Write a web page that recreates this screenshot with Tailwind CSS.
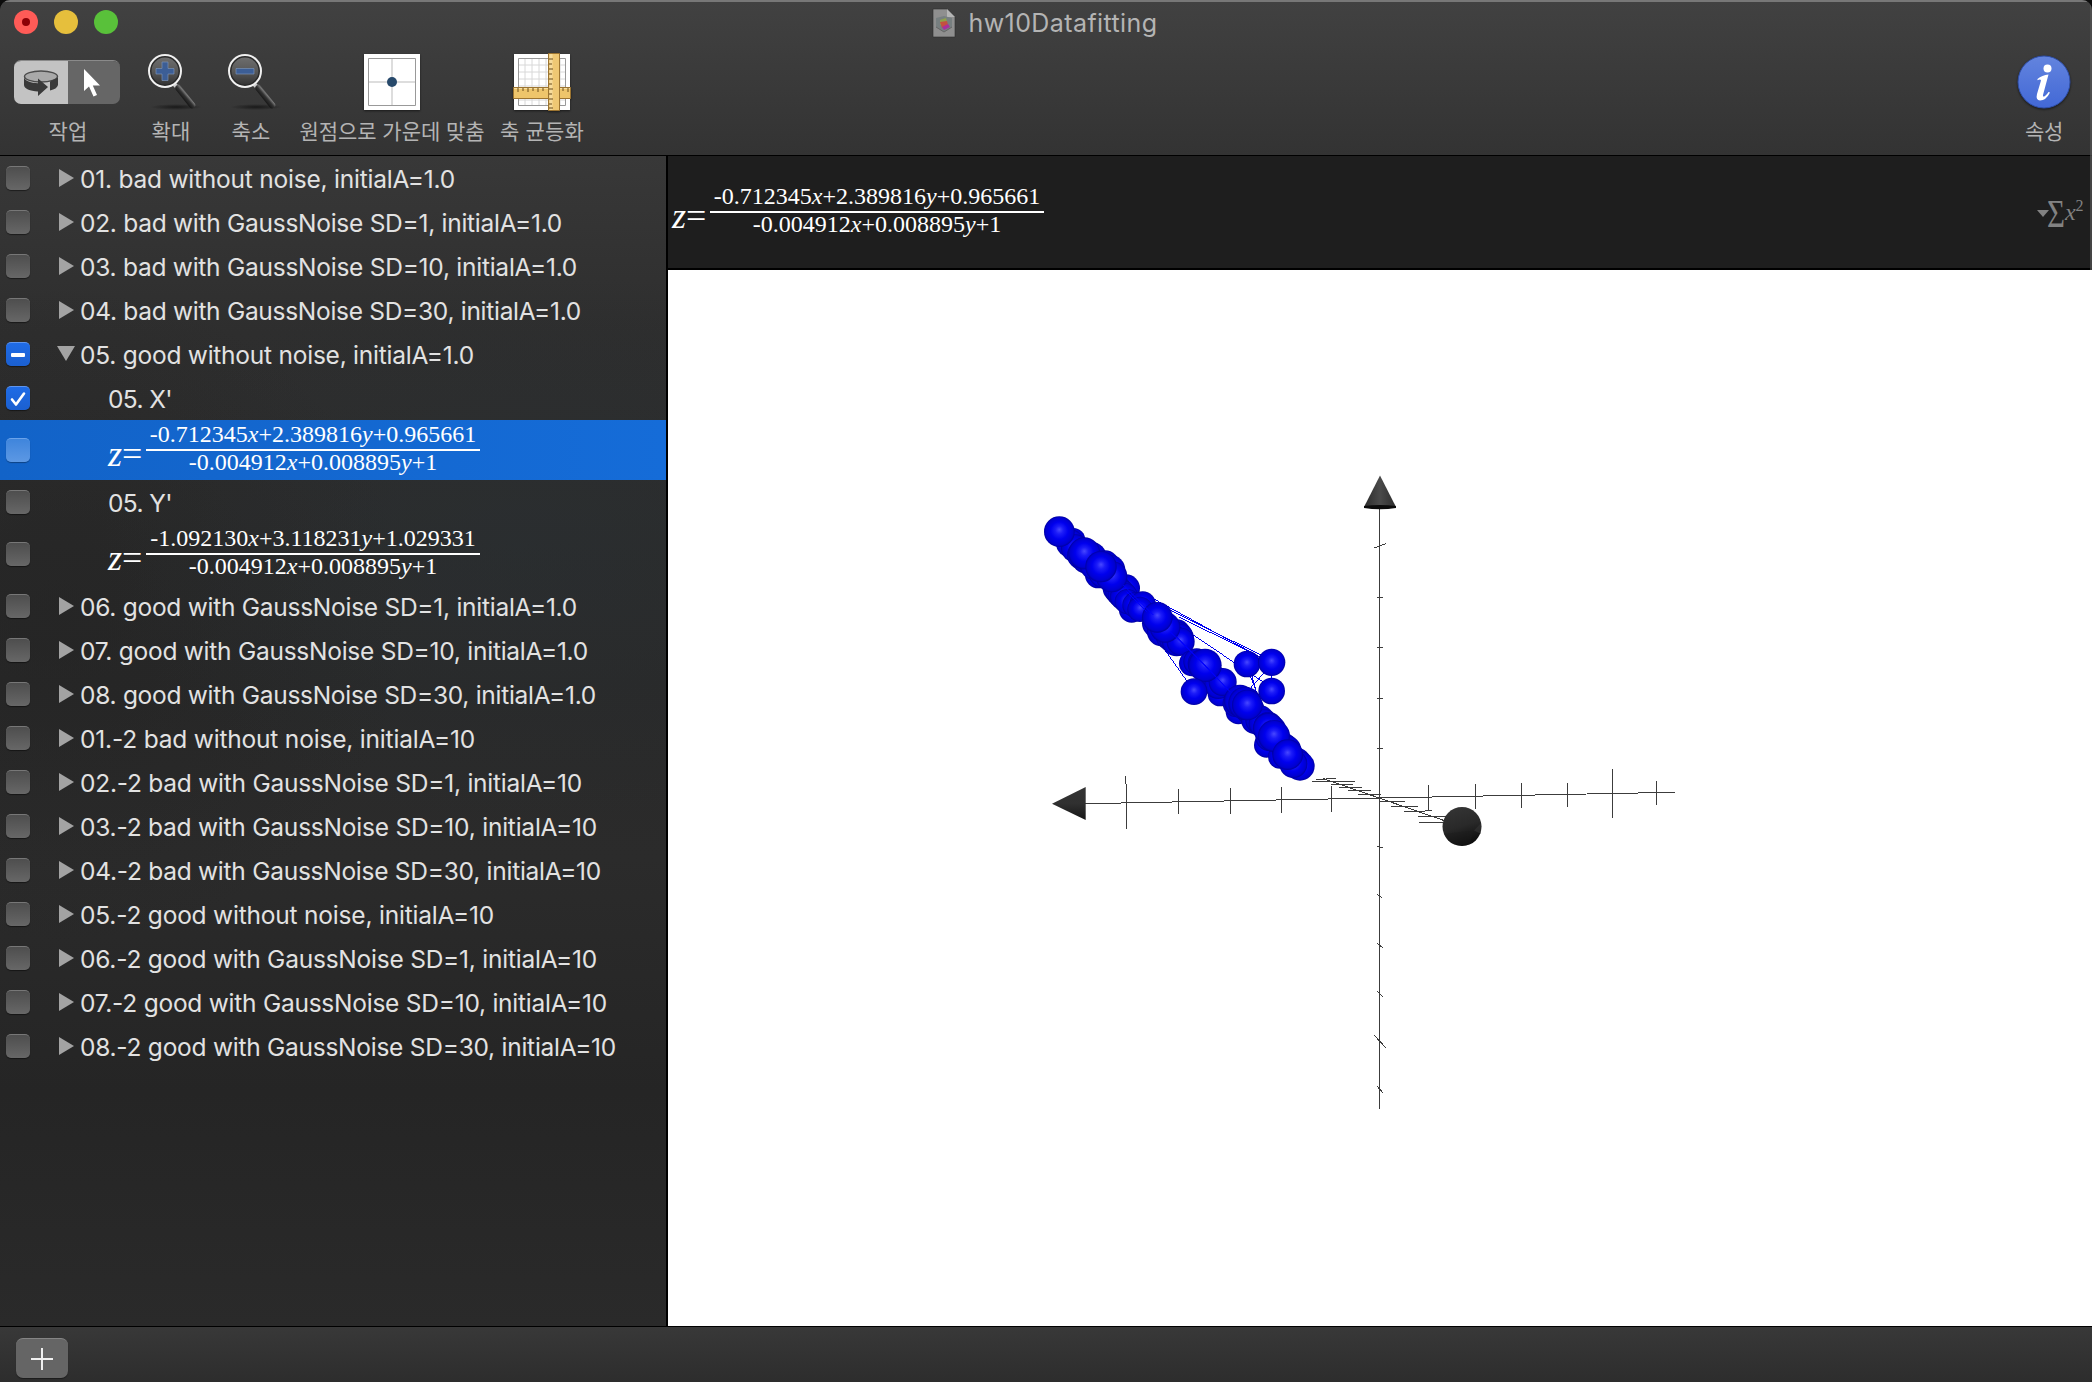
<!DOCTYPE html>
<html lang="ko">
<head>
<meta charset="utf-8">
<title>hw10Datafitting</title>
<script src="https://cdn.jsdelivr.net/npm/@tailwindcss/browser@4"></script>
</head>
<body class="bg-[#0c0c0c] overflow-hidden">
<div class="relative flex flex-col w-[2092px] h-[1382px] overflow-hidden rounded-t-[10px] bg-[#333] font-[Inter,'Noto_Sans_CJK_KR',sans-serif]">

  <header class="relative h-[156px] shrink-0 border-b border-black border-t-2 border-t-[#777] bg-linear-to-b from-[#414141] to-[#333] text-[#b4b4b4]">
    <div class="relative flex h-[44px] items-center justify-center">
      <div class="absolute left-[14px] top-[8px] flex gap-4">
        <span class="flex size-6 items-center justify-center rounded-full bg-[#ff5b57]"><span class="size-2 rounded-full bg-[#8c0006]"></span></span>
        <span class="size-6 rounded-full bg-[#e6bf3c]"></span>
        <span class="size-6 rounded-full bg-[#59c13a]"></span>
      </div>
      <div class="flex items-center gap-[13px] pb-[2px] -ml-[3px]">
        <svg width="24" height="30" viewBox="0 0 24 30"><path d="M1 1H15L23 9V29H1Z" fill="#8f8f8f" stroke="#2b2b2b" stroke-width=".6"/><path d="M15 1V9H23Z" fill="#b5b5b5"/><path d="M4 10L12 8L20 10V19L12 24L4 19Z" fill="#777f80"/><path d="M8 12L14 10L15 14L8 17Z" fill="#8fa04a"/><path d="M8 14L15 13L16 17L10 20Z" fill="#c4503f"/><path d="M10 19L16 16L18 19L12 22Z" fill="#a8309c"/><path d="M4 19L12 24L20 19" fill="none" stroke="#666"/></svg>
        <span data-fit="189" data-size="25" class="whitespace-nowrap text-[25px] leading-[30px]">hw10Datafitting</span>
      </div>
    </div>
    <div class="flex pl-[14px]">
      <div class="flex w-[106px] flex-col items-center">
        <div class="mt-[14px] flex h-11 w-full overflow-hidden rounded-[7px] border-t border-[#8a8a8a]">
          <div class="flex w-[54px] items-center justify-center bg-[#c3c3c3]">
            <svg width="36" height="28" viewBox="0 0 36 28"><ellipse cx="18" cy="7.500" rx="16.500" ry="5.500" fill="#a9a9a9" stroke="#4c4c4c" stroke-width="1.400"/><path d="M1 8C2 12 8 14 15 14.200V9.500L25 18L15 27V22.500C7 22 1 19.500 1 16Z" fill="#3a3a3a"/><path d="M27 12.500L35 8.500V16Q34 20 27 21.500Z" fill="#3a3a3a"/></svg>
          </div>
          <div class="flex flex-1 items-center justify-center bg-[#666]">
            <svg class="-ml-[4px]" width="18" height="28" viewBox="0 0 18 28"><path d="M1 0V22L6 17.500L10.500 27.500L14 26L9.800 16.500H17Z" fill="#fff"/></svg>
          </div>
        </div>
        <span data-fit="39" data-size="21" class="mt-[13px] ml-[2px] whitespace-nowrap text-[21px] leading-[30px]">작업</span>
      </div>
      <div class="ml-[19px] flex w-[64px] flex-col items-center">
        <svg class="mt-[4px]" width="64" height="62" viewBox="139 50 64 62">
          <defs><linearGradient id="lens" x1="0" y1="0" x2="0" y2="1"><stop offset="0" stop-color="#707070"/><stop offset=".5" stop-color="#585858"/><stop offset="1" stop-color="#303030"/></linearGradient>
          <linearGradient id="hd" gradientUnits="userSpaceOnUse" x1="182" y1="99" x2="189" y2="93"><stop offset="0" stop-color="#111"/><stop offset=".45" stop-color="#333"/><stop offset=".7" stop-color="#777"/><stop offset="1" stop-color="#111"/></linearGradient>
          <radialGradient id="shd"><stop offset="0" stop-color="#000" stop-opacity=".55"/><stop offset="1" stop-color="#000" stop-opacity="0"/></radialGradient></defs>
          <g id="glass"><ellipse cx="176" cy="107" rx="26" ry="3" fill="url(#shd)"/><path d="M173 83L177 87" stroke="#ccc" stroke-width="4"/><path d="M178.500 88L192 105" stroke="url(#hd)" stroke-width="6.500" stroke-linecap="round"/><circle cx="165" cy="71" r="15" fill="url(#lens)" stroke="#2a2a2a" stroke-width="3"/><circle cx="165" cy="71" r="16" fill="none" stroke="#f0f0f0" stroke-width="2"/></g>
          <path d="M162 62H168V68.500H174V74H168V80.500H162V74H156V68.500H162Z" fill="#3c5e96" stroke="#7890b4" stroke-width=".7"/>
        </svg>
        <span data-fit="39" data-size="21" class="mt-[5px] whitespace-nowrap text-[21px] leading-[30px]">확대</span>
      </div>
      <div class="ml-[16px] flex w-[64px] flex-col items-center">
        <svg class="mt-[4px]" width="64" height="62" viewBox="139 50 64 62"><use href="#glass"/><path d="M156 68.500H174V74H156Z" fill="#3c5e96" stroke="#7890b4" stroke-width=".7"/></svg>
        <span data-fit="39" data-size="21" class="mt-[5px] whitespace-nowrap text-[21px] leading-[30px]">축소</span>
      </div>
      <div class="ml-[14px] flex w-[190px] flex-col items-center">
        <svg class="mt-[8px] drop-shadow-[0_1px_1px_#0008]" width="56" height="56"><path d="M0 0H56V56H0Z" fill="#fff"/><path d="M28 4V52M4 28H52" stroke="#ddd" stroke-width="2"/><path d="M4.500 4.500H51.500V51.500H4.500Z" fill="none" stroke="#999"/><circle cx="28" cy="28" r="5" fill="#27496b"/></svg>
        <span data-fit="185" data-size="21" class="mt-[7px] whitespace-nowrap text-[21px] leading-[30px]">원점으로 가운데 맞춤</span>
      </div>
      <div class="ml-[10px] flex w-[90px] flex-col items-center">
        <svg class="mt-[7px] drop-shadow-[0_1px_1px_#0008]" width="58" height="58" viewBox="-1 -1 58 58">
          <path d="M0 0H56V56H0Z" fill="#fff"/><path d="M11 4V52M18 4V52M25 4V52M32 4V52M39 4V52M46 4V52M4 11H52M4 18H52M4 25H52M4 32H52M4 39H52M4 46H52" stroke="#d8d8d8"/><path d="M4.500 4.500H51.500V51.500H4.500Z" fill="none" stroke="#999"/>
          <path d="M-.5 33.500H56.500V44.500H-.5Z" fill="#eec56b" stroke="#9c7430"/><path d="M0 34.500H56" stroke="#f9e0a0"/><path d="M4 34v4M9 34v3M14 34v4M19 34v3M24 34v4M29 34v3M49 34v3M54 34v4" stroke="#6b4d1c"/>
          <path d="M34.500 -.5H45.500V56.500H34.500Z" fill="#efc874" stroke="#9c7430"/><path d="M37 0V56" stroke="#f7dc9c" stroke-width="3"/><path d="M35 5h4M35 10h3M35 15h4M35 20h3M35 25h4M35 30h3M35 35h4M35 40h3M35 45h4M35 50h3M35 54h4" stroke="#6b4d1c"/>
        </svg>
        <span data-fit="84" data-size="21" class="mt-[6px] whitespace-nowrap text-[21px] leading-[30px]">축 균등화</span>
      </div>
      <div class="ml-auto mr-[16px] flex w-[64px] flex-col items-center">
        <svg class="mt-[9px] drop-shadow-[0_1px_1px_#0009]" width="54" height="54"><defs><linearGradient id="inf" x1="0" y1="0" x2="0" y2="1"><stop offset="0" stop-color="#6384de"/><stop offset="1" stop-color="#4268d6"/></linearGradient></defs><circle cx="27" cy="27" r="26" fill="url(#inf)" stroke="#2f4fa8"/><circle cx="30.500" cy="13.500" r="4" fill="#fff"/><path d="M20.500 24Q25 20 31.500 19.500L26 40Q25.500 42.500 28 41Q30 39.500 31.500 37L33 37.500Q29 45.500 23 45.500Q18.500 45 20 39L24 25.500Q23.500 23.500 20.500 25.200Z" fill="#fff"/></svg>
        <span data-fit="38" data-size="21" class="mt-[8px] whitespace-nowrap text-[21px] leading-[30px]">속성</span>
      </div>
    </div>
  </header>

  <main class="flex h-[1170px] shrink-0">
    <aside id="list" class="w-[666px] shrink-0 bg-[radial-gradient(ellipse_420px_280px_at_520px_390px,#29303480,#29303400),radial-gradient(ellipse_350px_330px_at_60px_460px,#22222290,#22222200),linear-gradient(#383838,#2e2e2e_15%,#292929_45%,#2b2b2b_60%,#252525_80%,#2a2a2a)]"></aside>
    <section class="flex flex-1 flex-col border-l-2 border-black">
      <div class="flex h-[114px] shrink-0 items-start justify-between border-b-2 border-black bg-[#1e1e1e] pl-[4px] pr-[4px] pt-[26px]">
        <div id="formula"></div>
        <svg class="mt-[12px]" width="52" height="38" viewBox="2036 194 52 38" fill="#828282"><path d="M2037 210H2049L2043 217Z"/><text x="2047" y="226.500" font-family="Liberation Serif" font-size="40" textLength="18" lengthAdjust="spacingAndGlyphs">Σ</text><text x="2065" y="220" font-family="Liberation Serif" font-style="italic" font-size="24">x</text><text x="2075.500" y="211" font-family="Liberation Serif" font-size="16">2</text></svg>
      </div>
      <svg class="block bg-white" width="1424" height="1056" viewBox="668 270 1424 1056">
        <defs>
          <radialGradient id="ball" cx=".5" cy=".5" r=".52" fx=".5" fy=".43"><stop offset="0" stop-color="#4848ff"/><stop offset=".25" stop-color="#1c1cf8"/><stop offset=".55" stop-color="#0000ee"/><stop offset=".85" stop-color="#0000d0"/><stop offset="1" stop-color="#000090"/></radialGradient>
          <linearGradient id="cu"><stop offset="0" stop-color="#2b2b2b"/><stop offset=".5" stop-color="#4a4a4a"/><stop offset="1" stop-color="#2c2c2c"/></linearGradient>
          <linearGradient id="cl" x1="0" y1="0" x2="0" y2="1"><stop offset="0" stop-color="#343434"/><stop offset=".5" stop-color="#303030"/><stop offset="1" stop-color="#161616"/></linearGradient>
          <linearGradient id="cb" x1=".3" y1="0" x2=".6" y2="1"><stop offset="0" stop-color="#343434"/><stop offset=".5" stop-color="#292929"/><stop offset="1" stop-color="#0a0a0a"/></linearGradient>
        </defs>
        <g stroke="#3c3c3c" shape-rendering="crispEdges" fill="none">
          <path d="M1085 803.700L1675 792.300M1379.500 508V1109M1323 778.500L1444 820.500"/>
          <path d="M1125.500 776V784M1126.500 784V829M1178.500 789V814M1230.500 788V814M1281.500 787V813M1331.500 786V812M1428.500 785V810M1475.500 784V809M1521.500 783V808M1567.500 783V807M1612.500 769V818M1656.500 781V805"/>
          <path d="M1374 548L1386 543.500M1377 597.500H1383M1377 647.500H1383M1377 698.500H1383M1377 748L1383 749M1377 846L1383 848M1377 894L1382 898M1377 943L1383 948M1377 991L1383 997M1374 1035L1386 1048M1377 1086L1383 1093"/>
          <path d="M1316 779.500L1336 778.500M1312 781.500H1355M1331 784.500H1353M1339 787.500H1362M1348 790.500H1371M1358 794.500H1381M1380 801.500H1405M1391 806.500H1418M1404 811.500H1425M1425 810.500H1432M1418 816.500H1446M1419 822.500H1443"/>
        </g>
        <path d="M1380 475.500L1396 507Q1380 511 1364 507Z" fill="url(#cu)"/><path d="M1364 506Q1380 504 1396 506V508Q1380 510.500 1364 508Z" fill="#0b0b0b"/>
        <path d="M1052 803.700L1085.700 787V820Z" fill="url(#cl)"/>
        <circle cx="1462" cy="826.600" r="19.500" fill="url(#cb)"/><path d="M1474 830.500L1444 834A19.500 19.500 0 0 0 1462 846A19.500 19.500 0 0 0 1470 844Z" fill="#1b1b1b" opacity=".4"/><path d="M1474 830.500L1481 823L1481 834Z" fill="#3a3a3a" opacity=".5"/>
        <g transform="translate(1020 490) scale(.33333)">
          <g id="balls" fill="url(#ball)"></g>
        </g>
      </svg>
    </section>
  </main>

  <footer class="flex flex-1 items-start border-t border-black bg-linear-to-b from-[#383838] to-[#2d2d2d] pl-4 pt-[11px]">
    <button class="flex h-10 w-[52px] items-center justify-center rounded-[7px] border-t border-[#858585] bg-[#656565] shadow-[0_1px_1px_#0006]"><svg width="22" height="22" stroke="#f0f0f0" stroke-width="2"><path d="M11 0V22M0 11H22"/></svg></button>
  </footer>
  <div class="absolute right-0 top-0 h-[270px] w-[2px] bg-[#555]/70"></div>
</div>

<script>
const eq = (a, b, c) => `
  <div class="flex h-[60px] items-start font-['Liberation_Serif',serif] text-white">
    <span class="mt-[14px] w-[38px] whitespace-nowrap text-[36px] leading-[40px]"><i>z</i>=</span>
    <div class="flex w-[334px] flex-col items-center whitespace-nowrap text-[24px]">
      <div class="h-[29px] leading-[29px]">${a}<i>x</i>+${b}<i>y</i>+${c}</div>
      <div class="h-[2px] w-full bg-white"></div>
      <div class="leading-[22px]">-0.004912<i>x</i>+0.008895<i>y</i>+1</div>
    </div>
  </div>`;
const first = eq('-0.712345', '2.389816', '0.965661');
const second = eq('-1.092130', '3.118231', '1.029331');
const rows = [
  ['01. bad without noise, initialA=1.0', 375],
  ['02. bad with GaussNoise SD=1, initialA=1.0', 482],
  ['03. bad with GaussNoise SD=10, initialA=1.0', 497],
  ['04. bad with GaussNoise SD=30, initialA=1.0', 501],
  ['05. good without noise, initialA=1.0', 394, 'open', 'mixed'],
  ["05. X'", 64, 'leaf', 'on'],
  [first, 0, 'eq', 'sel'],
  ["05. Y'", 64, 'leaf'],
  [second, 0, 'eq'],
  ['06. good with GaussNoise SD=1, initialA=1.0', 497],
  ['07. good with GaussNoise SD=10, initialA=1.0', 508],
  ['08. good with GaussNoise SD=30, initialA=1.0', 516],
  ['01.-2 bad without noise, initialA=10', 395],
  ['02.-2 bad with GaussNoise SD=1, initialA=10', 502],
  ['03.-2 bad with GaussNoise SD=10, initialA=10', 517],
  ['04.-2 bad with GaussNoise SD=30, initialA=10', 521],
  ['05.-2 good without noise, initialA=10', 414],
  ['06.-2 good with GaussNoise SD=1, initialA=10', 517],
  ['07.-2 good with GaussNoise SD=10, initialA=10', 527],
  ['08.-2 good with GaussNoise SD=30, initialA=10', 536],
];
const boxes = {
  off: '<span class="size-6 shrink-0 rounded-[5px] border-t border-[#777] bg-linear-to-b from-[#4e4e4e] to-[#676767] shadow-[0_1px_1px_#0007]"></span>',
  sel: '<span class="size-6 shrink-0 rounded-[5px] border-t border-[#6ba3ea] bg-linear-to-b from-[#3f85dc] to-[#5c98e4] shadow-[0_1px_1px_#0005]"></span>',
  mixed: '<span class="flex size-6 shrink-0 items-center justify-center rounded-[5px] border-t border-[#5e95ee] bg-linear-to-b from-[#1f6be6] to-[#1b60d0] shadow-[0_1px_1px_#0007]"><span class="h-1 w-[14px] rounded-[1px] bg-white"></span></span>',
  on: '<span class="flex size-6 shrink-0 items-center justify-center rounded-[5px] border-t border-[#5e95ee] bg-linear-to-b from-[#1f6be6] to-[#1b60d0] shadow-[0_1px_1px_#0007]"><svg width="18" height="16" fill="none" stroke="#fff" stroke-width="2.600" stroke-linecap="round" stroke-linejoin="round"><path d="M3 8.500L7 13.500L15 2.500"/></svg></span>',
};
const closed = '<svg class="ml-[29px] mr-[6px] -mt-[1px] shrink-0" width="15" height="18" fill="#a3a3a3"><path d="M0 0L15 9L0 18Z"/></svg>';
const opened = '<svg class="ml-[27px] mr-[5px] -mt-[1px] shrink-0" width="18" height="15" fill="#a3a3a3"><path d="M0 0H18L9 15Z"/></svg>';
document.getElementById('list').innerHTML = rows.map(([t, w, kind, state]) => {
  if (kind === 'eq') return state === 'sel'
    ? `<div class="flex h-[60px] items-center bg-linear-to-r from-[#1263c8] to-[#156cd8] pl-[6px]">${boxes.sel}<div class="ml-[78px]">${t}</div></div>`
    : `<div class="flex h-[60px] items-center pl-[6px]">${boxes.off}<div class="ml-[78px]">${t}</div></div>`;
  const lead = kind === 'leaf' ? '<span class="w-[78px]"></span>' : kind === 'open' ? opened : closed;
  return `<div class="flex h-[44px] items-center pl-[6px]">${boxes[state || 'off']}${lead}<span data-fit="${w}" data-size="24.5" class="mt-[2px] whitespace-nowrap text-[24.500px] leading-[30px] text-[#e2e2e2]">${t}</span></div>`;
}).join('');
document.getElementById('formula').innerHTML = first;

const ctx = document.createElement('canvas').getContext('2d');
document.querySelectorAll('[data-fit]').forEach(el => {
  ctx.font = `${el.dataset.size}px Inter, "Noto Sans CJK KR", sans-serif`;
  const s = el.textContent;
  el.style.letterSpacing = ((+el.dataset.fit - ctx.measureText(s).width) / s.length).toFixed(3) + 'px';
});

// Scatter series, painted back to front: [x, y, radius].
const back = [[160,150,36],[150,160,42],[165,175,42],[185,195,44],[200,205,46],[215,200,44],[235,255,40],[225,225,46],[255,225,44],[270,240,46],[250,250,44],
 [318,295,42],[290,295,42],[298,305,42],[305,312,42],[312,320,42],[335,360,38],[322,335,38],[345,345,38],[368,344,40],[360,358,38],
 [410,400,44],[425,425,44],[470,430,42],[475,440,44],[478,445,44],[450,440,42],[460,448,42],[470,455,44],[482,455,42],[516,520,39],[530,515,40],
 [600,612,37],[585,570,42],[595,585,42],[608,576,42],[655,665,38],[650,640,42],[690,660,44],[705,690,42],[720,690,44],[740,765,38],[730,700,44],[745,710,44],[755,720,44],[750,740,44],
 [790,770,42],[780,800,36],[800,780,44],[830,815,42],[840,828,44],[820,822,42]];
const front = [[118,125,46],[193,190,48],[275,260,47],[243,230,47],[435,412,46],[412,382,46],[545,520,42],[555,526,50],[660,632,48],[675,640,50],[682,645,46],[745,715,46],[762,738,48],[803,794,46],
 [522,605,40],[681,522,40],[755,517,41],[755,603,40]];
const c = ([x, y, r]) => `<circle cx="${x}" cy="${y}" r="${r}"/>`;
const line = '<path shape-rendering="crispEdges" fill="none" stroke="#0000f0" stroke-width="3" d="M400 326L722 502M430 350L722 495M478 382L700 490M520 435L735 580M436 482L500 572M742 538L690 596M690 555L712 612M695 555L708 600M755 540V580"/>';
const over = '<path fill="none" stroke="#0000ff" stroke-width="3" d="M310 285L400 375M320 305L380 365M450 425L560 530M470 440L630 605M560 530L625 600"/>';
document.getElementById('balls').innerHTML = line + back.map(c).join('') + front.map(c).join('') + over;
</script>
</body>
</html>
